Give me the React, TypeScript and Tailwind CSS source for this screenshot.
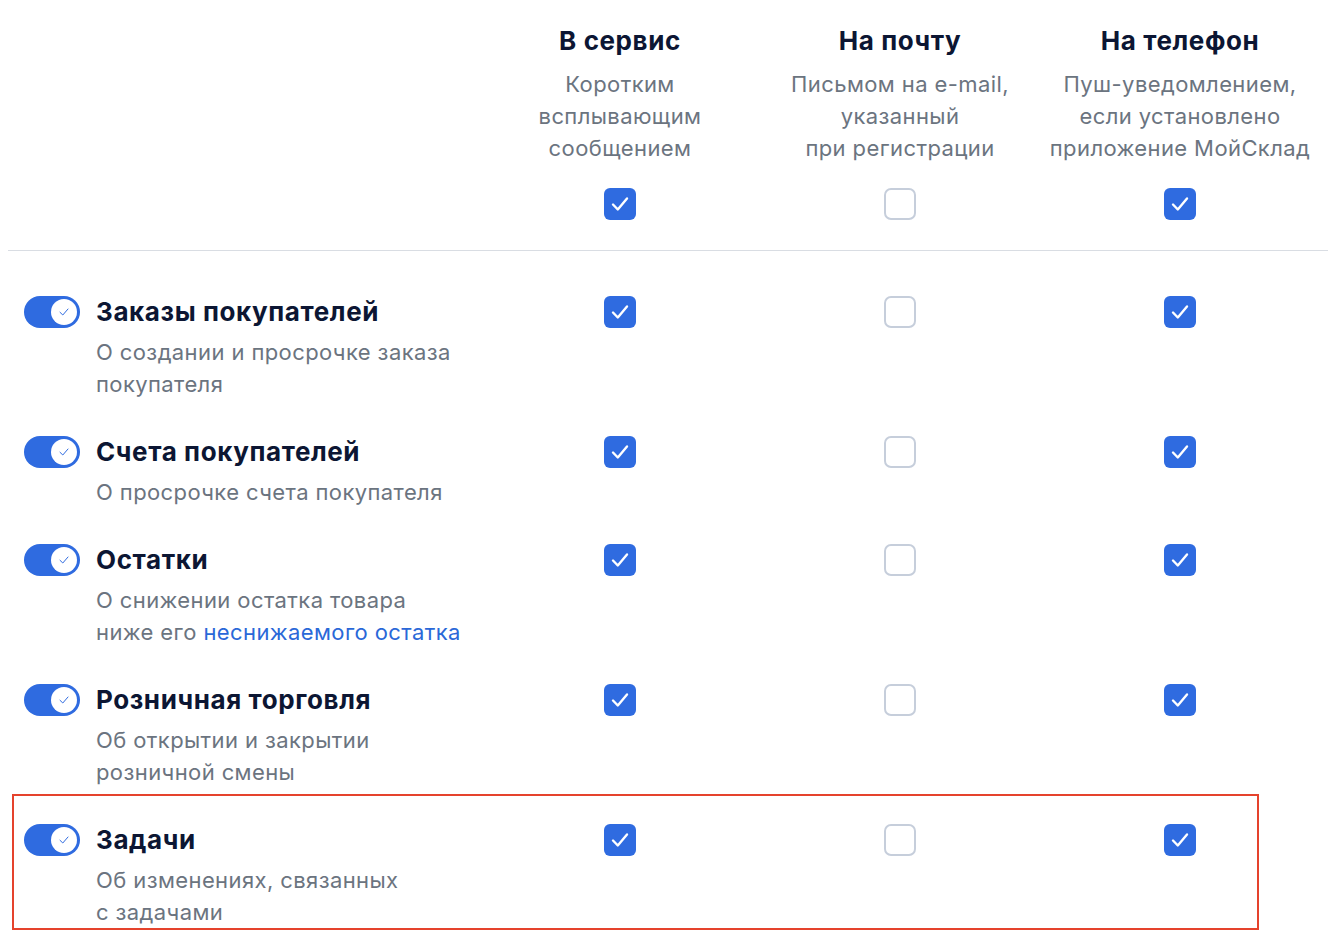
import React from "react"

const font = { fontFamily: "Inter, 'Noto Sans', sans-serif" }

type Row = {
  title: string
  desc: React.ReactNode
  service: boolean
  mail: boolean
  phone: boolean
}

const rows: Row[] = [
  {
    title: "Заказы покупателей",
    desc: (
      <>
        О создании и просрочке заказа
        <br />
        покупателя
      </>
    ),
    service: true,
    mail: false,
    phone: true,
  },
  {
    title: "Счета покупателей",
    desc: <>О просрочке счета покупателя</>,
    service: true,
    mail: false,
    phone: true,
  },
  {
    title: "Остатки",
    desc: (
      <>
        О снижении остатка товара
        <br />
        ниже его <span className="text-[#2a68d8]">неснижаемого остатка</span>
      </>
    ),
    service: true,
    mail: false,
    phone: true,
  },
  {
    title: "Розничная торговля",
    desc: (
      <>
        Об открытии и закрытии
        <br />
        розничной смены
      </>
    ),
    service: true,
    mail: false,
    phone: true,
  },
  {
    title: "Задачи",
    desc: (
      <>
        Об изменениях, связанных
        <br />с задачами
      </>
    ),
    service: true,
    mail: false,
    phone: true,
  },
]

function Checkbox({ checked }: { checked: boolean }) {
  if (!checked) {
    return <div className="w-8 h-8 rounded-[7px] border-2 border-[#c6cedb] bg-white" />
  }
  return (
    <div className="w-8 h-8 rounded-[6px] bg-[#2f6be0] flex items-center justify-center">
      <svg width="32" height="32" viewBox="0 0 32 32" fill="none">
        <path
          d="M9 16.5 L13.8 21.5 L23 10.5"
          stroke="white"
          strokeWidth="2.4"
          strokeLinecap="round"
          strokeLinejoin="round"
        />
      </svg>
    </div>
  )
}

function Toggle() {
  return (
    <div className="w-14 h-8 rounded-full bg-[#2f6be0] flex items-center justify-end pr-[3px] shrink-0">
      <div className="w-[26px] h-[26px] rounded-full bg-white flex items-center justify-center">
        <svg width="14" height="14" viewBox="0 0 14 14" fill="none">
          <path
            d="M3 7.3 L5.8 10 L11 4"
            stroke="#2f6be0"
            strokeWidth="1"
            strokeLinecap="round"
            strokeLinejoin="round"
          />
        </svg>
      </div>
    </div>
  )
}

const columns = [
  {
    title: "В сервис",
    desc: (
      <>
        Коротким
        <br />
        всплывающим
        <br />
        сообщением
      </>
    ),
    checked: true,
  },
  {
    title: "На почту",
    desc: (
      <>
        Письмом на e-mail,
        <br />
        указанный
        <br />
        при регистрации
      </>
    ),
    checked: false,
  },
  {
    title: "На телефон",
    desc: (
      <>
        Пуш-уведомлением,
        <br />
        если установлено
        <br />
        приложение МойСклад
      </>
    ),
    checked: true,
  },
]

const grid = "grid grid-cols-[472px_280px_280px_280px]"
const titleCls = "text-[26px] leading-[32px] font-bold text-[#0c1633] tracking-[0.6px]"
const descCls = "text-[22px] leading-[32px] text-[#6b7480] tracking-[0.4px]"

export default function App() {
  return (
    <div className="w-[1342px] min-h-[950px] bg-white px-2" style={font}>
      <div className={`${grid} pt-[25px] pb-[30px]`}>
        <div />
        {columns.map((c) => (
          <div key={c.title} className="flex flex-col items-center text-center">
            <div className={titleCls}>{c.title}</div>
            <div className={`mt-[11px] ${descCls}`}>{c.desc}</div>
            <div className="mt-6">
              <Checkbox checked={c.checked} />
            </div>
          </div>
        ))}
      </div>

      <div className="w-[1320px] h-px bg-[#d9dde3]" />

      <div className="pt-[9px]">
        {rows.map((r, i) => (
          <div key={r.title} className={`relative ${grid} pt-9`}>
            <div className="flex gap-4 pl-4">
              <Toggle />
              <div className="flex flex-col">
                <div className={titleCls}>{r.title}</div>
                <div className={`mt-2 ${descCls}`}>{r.desc}</div>
              </div>
            </div>
            <div className="flex justify-center">
              <Checkbox checked={r.service} />
            </div>
            <div className="flex justify-center">
              <Checkbox checked={r.mail} />
            </div>
            <div className="flex justify-center">
              <Checkbox checked={r.phone} />
            </div>
            {i === rows.length - 1 && (
              <div className="absolute top-[6px] left-[4px] w-[1247px] h-[136px] border-2 border-[#e5432d] pointer-events-none" />
            )}
          </div>
        ))}
      </div>
    </div>
  )
}
